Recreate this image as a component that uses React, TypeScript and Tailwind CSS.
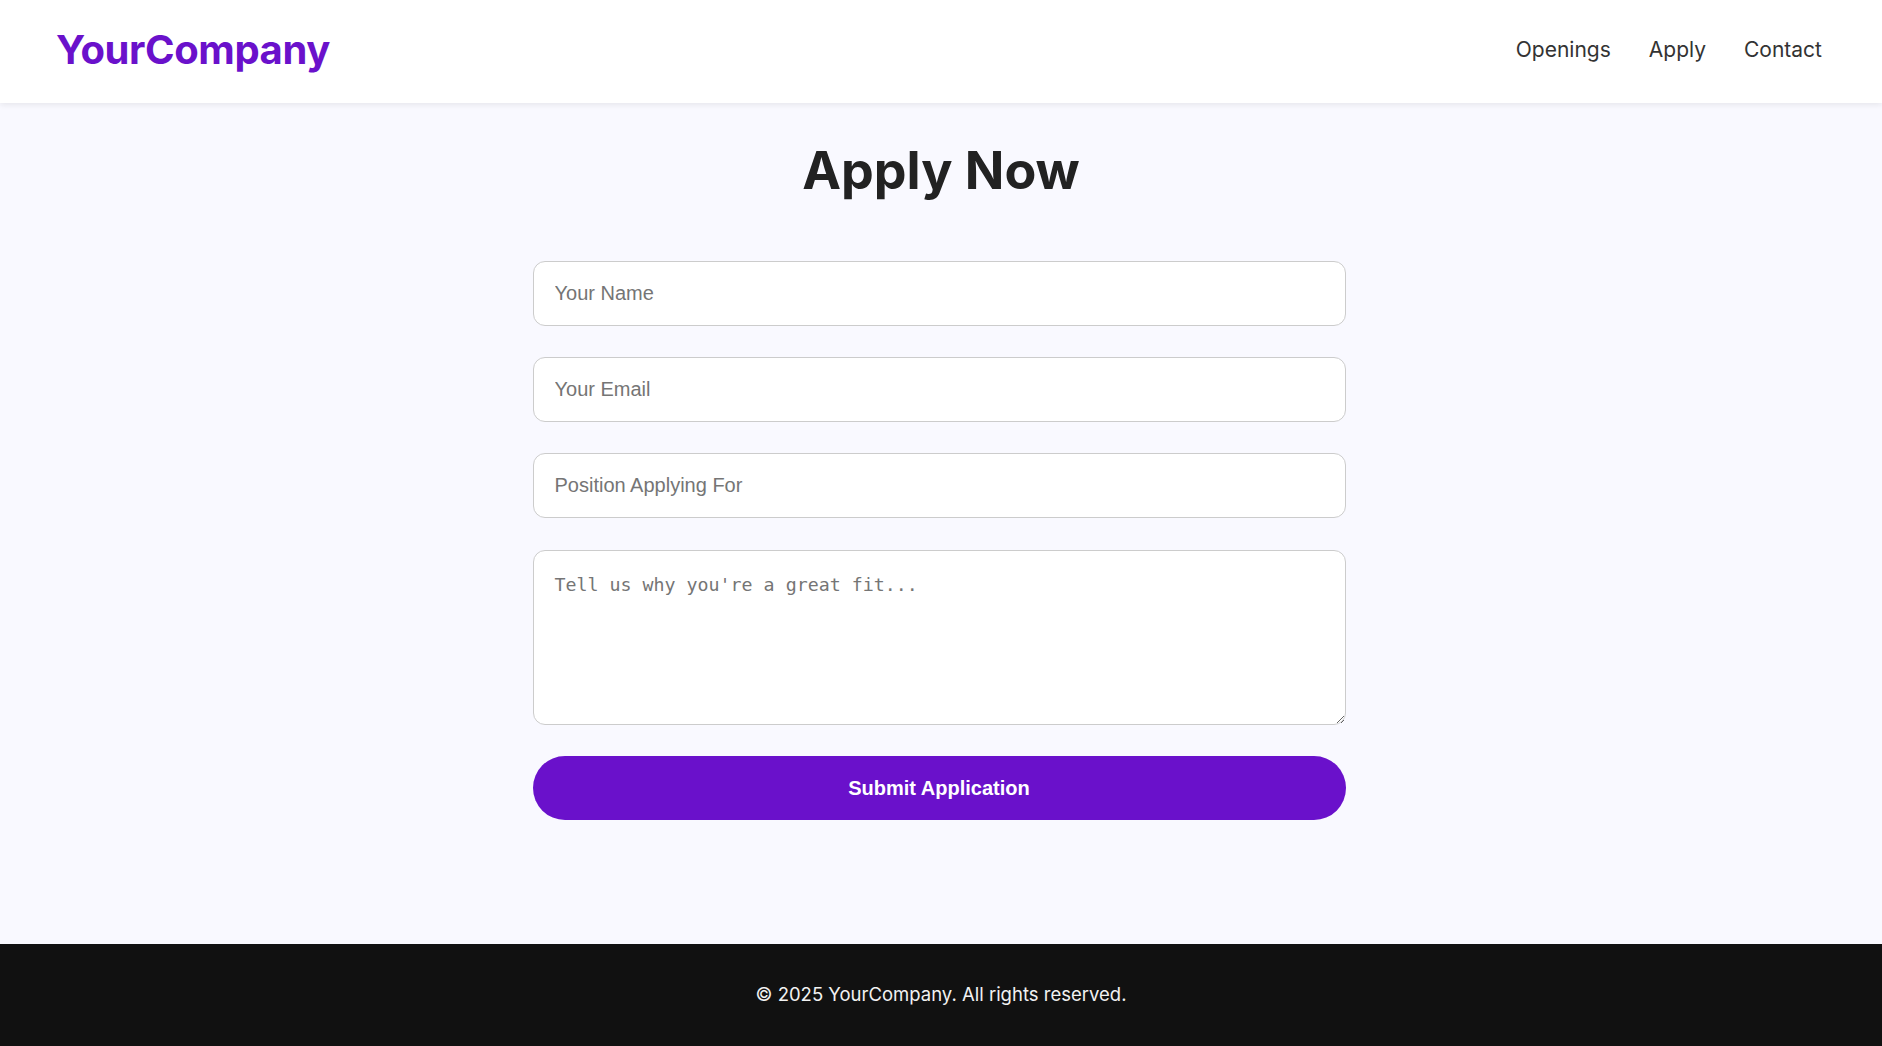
import React from "react";

const fieldClass =
  "h-[65px] px-[21px] bg-white border border-[#ccc] rounded-[12px] text-[20px] font-['Liberation_Sans',Arial,sans-serif] text-[#222] placeholder:text-[#757575] outline-none";

const App = () => {
  return (
    <div className="flex flex-col h-screen bg-[#f9f9ff] font-['Inter',sans-serif]">
      <header className="flex items-center justify-between h-[103px] pb-[4px] pl-[56px] pr-[60px] bg-white shadow-[0_2px_6px_rgba(0,0,0,0.08)] relative z-10">
        <h1 className="text-[40px] font-bold text-[#6a11cb] tracking-[-0.4px]">YourCompany</h1>
        <nav className="flex gap-[38px] text-[21px] text-[#333]">
          <a href="#">Openings</a>
          <a href="#">Apply</a>
          <a href="#">Contact</a>
        </nav>
      </header>

      <main className="flex-1 flex flex-col items-center pt-[34px]">
        <h2 className="text-[52px] font-bold text-[#222] leading-[1.3]">Apply Now</h2>
        <form className="w-[813px] flex flex-col gap-[31px] mt-[56px] mr-[4px]">
          <input type="text" placeholder="Your Name" className={fieldClass} />
          <input type="email" placeholder="Your Email" className={fieldClass} />
          <input type="text" placeholder="Position Applying For" className={fieldClass} />
          <textarea
            placeholder="Tell us why you're a great fit..."
            className="h-[175px] mt-[1px] px-[21px] py-[20px] bg-white border border-[#ccc] rounded-[12px] text-[18.3px] font-['DejaVu_Sans_Mono',monospace] text-[#222] placeholder:text-[#757575] outline-none"
          />
          <button
            type="button"
            className="h-[64px] rounded-full bg-[#6a11cb] text-white text-[20px] font-bold font-['Liberation_Sans',Arial,sans-serif]"
          >
            Submit Application
          </button>
        </form>
      </main>

      <footer className="h-[102px] flex items-center justify-center bg-[#111] text-[#f2f2f2] text-[18.5px]">
        © 2025 YourCompany. All rights reserved.
      </footer>
    </div>
  );
};

export default App;
